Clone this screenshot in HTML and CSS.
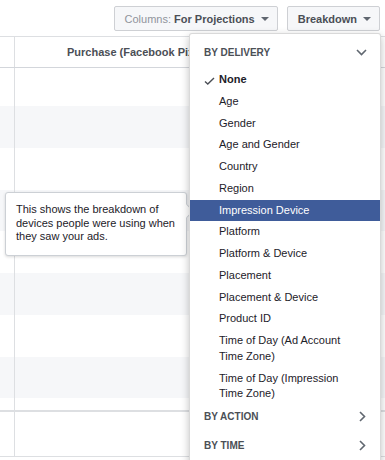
FILE: index.html
```html
<!DOCTYPE html>
<html lang="en">
<head>
  <meta charset="UTF-8" />
  <title>Breakdown</title>
  <link rel="stylesheet" href="styles.css">
</head>
<body>
  <div class="page">
    <div class="toolbar">
      <button class="tool-button">
        <span class="label-muted">Columns:</span> For Projections
        <span class="caret"></span>
      </button>
      <button class="tool-button">
        Breakdown
        <span class="caret"></span>
      </button>
    </div>

    <div class="table">
      <div class="row header-row">
        <div class="cell cell-first"></div>
        <div class="cell cell-main">Purchase (Facebook Pixel)</div>
        <div class="cell cell-rest">Cost per Purchase</div>
      </div>
      <div class="row row-first">
        <div class="cell cell-first"></div><div class="cell cell-main"></div><div class="cell cell-rest"></div>
      </div>
      <div class="row">
        <div class="cell cell-first"></div><div class="cell cell-main"></div><div class="cell cell-rest"></div>
      </div>
      <div class="row">
        <div class="cell cell-first"></div><div class="cell cell-main"></div><div class="cell cell-rest"></div>
      </div>
      <div class="row">
        <div class="cell cell-first"></div><div class="cell cell-main"></div><div class="cell cell-rest"></div>
      </div>
      <div class="row">
        <div class="cell cell-first"></div><div class="cell cell-main"></div><div class="cell cell-rest"></div>
      </div>
      <div class="row">
        <div class="cell cell-first"></div><div class="cell cell-main"></div><div class="cell cell-rest"></div>
      </div>
      <div class="row">
        <div class="cell cell-first"></div><div class="cell cell-main"></div><div class="cell cell-rest"></div>
      </div>
      <div class="row">
        <div class="cell cell-first"></div><div class="cell cell-main"></div><div class="cell cell-rest"></div>
      </div>
      <div class="row row-spacer">
        <div class="cell cell-first"></div><div class="cell cell-main"></div><div class="cell cell-rest"></div>
      </div>
      <div class="row total-row">
        <div class="cell cell-first"></div><div class="cell cell-main"></div><div class="cell cell-rest"></div>
      </div>
    </div>

    <div class="tooltip">
      This shows the breakdown of devices people were using when they saw your ads.
    </div>

    <div class="dropdown">
      <div class="section section-top">
        <span>By Delivery</span>
        <svg width="11" height="7" viewBox="0 0 11 7"><polyline points="1,1 5.5,5.5 10,1" fill="none" stroke="#606770" stroke-width="1.6"/></svg>
      </div>
      <div class="item item-checked">
        <svg class="check" width="11" height="8" viewBox="0 0 11 8"><polyline points="1,4.5 3.8,7 10,1" fill="none" stroke="#4b4f56" stroke-width="1.4"/></svg>
        None
      </div>
      <div class="item">Age</div>
      <div class="item">Gender</div>
      <div class="item">Age and Gender</div>
      <div class="item">Country</div>
      <div class="item">Region</div>
      <div class="item item-active">Impression Device</div>
      <div class="item">Platform</div>
      <div class="item">Platform &amp; Device</div>
      <div class="item">Placement</div>
      <div class="item">Placement &amp; Device</div>
      <div class="item">Product ID</div>
      <div class="item">Time of Day (Ad Account Time Zone)</div>
      <div class="item">Time of Day (Impression Time Zone)</div>
      <div class="section">
        <span>By Action</span>
        <svg width="7" height="11" viewBox="0 0 7 11"><polyline points="1,1 5.5,5.5 1,10" fill="none" stroke="#606770" stroke-width="1.6"/></svg>
      </div>
      <div class="section">
        <span>By Time</span>
        <svg width="7" height="11" viewBox="0 0 7 11"><polyline points="1,1 5.5,5.5 1,10" fill="none" stroke="#606770" stroke-width="1.6"/></svg>
      </div>
    </div>
  </div>
</body>
</html>
```

FILE: styles.css
```css
* {
  box-sizing: border-box;
  margin: 0;
  padding: 0;
}

body {
  font-family: 'Liberation Sans', Arial, sans-serif;
  font-size: 11px;
  color: #1d2129;
  background: #fff;
  overflow: hidden;
}

.page {
  position: relative;
  width: 385px;
  height: 460px;
  overflow: hidden;
}

.toolbar {
  display: flex;
  justify-content: flex-end;
  gap: 9px;
  padding: 6px 5px 0 0;
}

.tool-button {
  height: 25px;
  padding: 0 8px 0 10px;
  background: #f6f7f9;
  border: 1px solid #ced0d4;
  border-radius: 2px;
  font-family: 'Liberation Sans', Arial, sans-serif;
  font-size: 11px;
  font-weight: bold;
  color: #4b4f56;
  display: flex;
  align-items: center;
  gap: 3px;
}

.label-muted {
  font-weight: normal;
  color: #90949c;
}

.caret {
  display: inline-block;
  margin-left: 3px;
  border-left: 4px solid transparent;
  border-right: 4px solid transparent;
  border-top: 4px solid #606770;
}

/* table */
.table {
  margin-top: 5px;
  border-top: 1px solid #dddfe2;
}

.row {
  display: flex;
  height: 41.75px;
}

.row:nth-child(odd) {
  background: #f6f7f9;
}

.header-row {
  height: 31px;
  border-bottom: 1px solid #d3d6db;
  background: #fff !important;
}

.row-first {
  height: 38px;
}

.row-spacer {
  height: 12px;
  background: #fff !important;
}

.total-row {
  height: 47px;
  border-top: 2px solid #dddfe2;
  border-bottom: 1px solid #dddfe2;
  background: #fff !important;
}

.cell-first {
  width: 15px;
  border-right: 1px solid #dddfe2;
}

.cell-main {
  width: 202px;
  border-right: 1px solid #dddfe2;
}

.cell-rest {
  flex: 1;
}

.header-row .cell {
  font-weight: bold;
  color: #4b4f56;
  white-space: nowrap;
  line-height: 30px;
}

.header-row .cell-main {
  text-align: right;
  padding-right: 9px;
}

.header-row .cell-rest {
  text-align: right;
  padding-right: 12px;
  overflow: hidden;
}

/* tooltip */
.tooltip {
  position: absolute;
  left: 5px;
  top: 192px;
  width: 182px;
  padding: 10px 5px 11px 10px;
  background: #fff;
  border: 1px solid #ccd0d5;
  border-radius: 3px;
  box-shadow: 0 1px 3px rgba(0, 0, 0, 0.15);
  line-height: 13.5px;
  color: #1d2129;
}

.tooltip::after {
  content: "";
  position: absolute;
  right: -6px;
  top: 13px;
  width: 9px;
  height: 9px;
  background: #fff;
  border-top: 1px solid #ccd0d5;
  border-right: 1px solid #ccd0d5;
  transform: rotate(45deg);
}

/* dropdown */
.dropdown {
  position: absolute;
  left: 189px;
  top: 33px;
  width: 192px;
  height: 440px;
  padding-top: 6px;
  background: #fff;
  border: 1px solid rgba(0, 0, 0, 0.15);
  border-radius: 3px;
  box-shadow: 0 3px 8px rgba(0, 0, 0, 0.25);
}

.section {
  display: flex;
  justify-content: space-between;
  align-items: center;
  padding: 4px 14px 10px 14px;
  line-height: 15px;
  font-size: 10px;
  font-weight: bold;
  text-transform: uppercase;
  color: #4b4f56;
}

.section-top {
  padding: 5px 13px 9px 14px;
}

.item {
  position: relative;
  padding: 3px 20px 3px 29px;
  line-height: 15.75px;
  color: #1d2129;
}

.item-checked {
  font-weight: bold;
}

.check {
  position: absolute;
  left: 14px;
  top: 8px;
}

.item-active {
  background: #3f5c9a;
  color: #fff;
}
```
